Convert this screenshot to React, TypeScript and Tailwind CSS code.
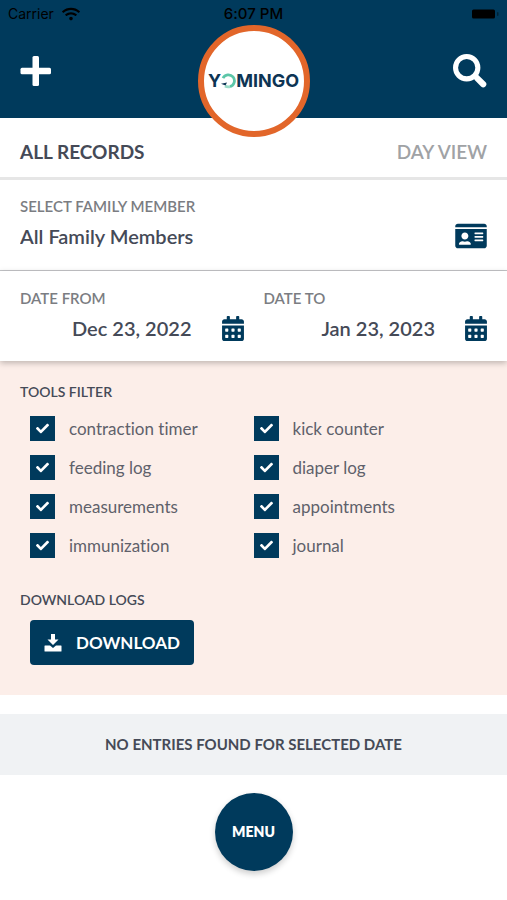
import React, { useState } from "react";
import { FaCalendarAlt, FaCheck, FaIdCard, FaWifi } from "react-icons/fa";

const tools: string[] = [
  "contraction timer",
  "kick counter",
  "feeding log",
  "diaper log",
  "measurements",
  "appointments",
  "immunization",
  "journal",
];

const StatusBar = () => (
  <div className="grid grid-cols-3 items-center h-7 px-2 text-[15px] text-black font-['Inter',sans-serif]">
    <div className="flex items-center gap-2 text-sm">
      <span>Carrier</span>
      <FaWifi className="w-[18px] h-4" />
    </div>
    <span className="text-center font-medium">6:07 PM</span>
    <svg viewBox="0 0 28 12" className="w-7 h-3 justify-self-end" aria-hidden="true">
      <rect x="1" y="1.5" width="23" height="9" rx="1.5" />
      <rect x="26" y="4" width="1.5" height="4" rx="0.7" opacity="0.4" />
    </svg>
  </div>
);

const Logo = () => (
  <div className="absolute left-1/2 top-[25px] -translate-x-1/2 flex size-28 items-center justify-center rounded-full border-[6px] border-[#e2662a] bg-white">
    <span className="flex items-center text-lg font-bold text-[#0d3454] font-['Inter',sans-serif]">
      Y
      <svg viewBox="1 0 15 16" className="h-4 w-[15px]" fill="none" aria-hidden="true">
        <path d="M3 5.2A6 6 0 1 1 10 13.6" stroke="#5cc6a8" strokeWidth="2.8" />
        <path d="M10 13.6A6 6 0 0 1 5 13" stroke="#9adcc8" strokeWidth="2.8" />
        <path d="M1 10.8L7 9.5L5.5 12.5Z" fill="#0d3454" />
      </svg>
      MINGO
    </span>
  </div>
);

type DateFieldProps = {
  id: string;
  label: string;
  defaultValue: string;
};

const DateField = ({ id, label, defaultValue }: DateFieldProps) => (
  <div>
    <label htmlFor={id} className="block text-[15px] leading-5 font-semibold text-[#7b7d82]">
      {label}
    </label>
    <div className="flex items-center pt-1">
      <input
        id={id}
        type="text"
        defaultValue={defaultValue}
        className="min-w-0 flex-1 pr-[30px] text-right text-xl leading-8 font-semibold text-[#454a57] outline-none"
      />
      <FaCalendarAlt className="w-[22px] h-[25px] text-[#003a5c]" />
    </div>
  </div>
);

const App = () => {
  const [selected, setSelected] = useState<string[]>(tools);

  const toggle = (tool: string) => {
    setSelected((prev) =>
      prev.includes(tool) ? prev.filter((t) => t !== tool) : [...prev, tool]
    );
  };

  return (
    <main className="min-h-screen bg-white font-['Lato',sans-serif] text-[#454a57] [font-variant-ligatures:none]">
      <header className="relative bg-[#003a5c]">
        <StatusBar />
        <div className="flex items-center justify-between px-5 pt-[26px] pb-[30px] text-white">
          <button type="button" aria-label="Add record">
            <svg viewBox="0 0 32 32" className="size-8" fill="currentColor" aria-hidden="true">
              <rect x="12.5" y="1" width="6.5" height="30" rx="1.5" />
              <rect x="0.5" y="12.7" width="30.5" height="6.5" rx="1.5" />
            </svg>
          </button>
          <button type="button" aria-label="Search">
            <svg viewBox="0 0 36 36" className="size-[34px]" fill="none" stroke="currentColor" aria-hidden="true">
              <circle cx="14.5" cy="14.5" r="11.8" strokeWidth="5.4" />
              <path d="M22.5 22.5L26 26" strokeWidth="4.5" />
              <path d="M25.5 25.5L32 32" strokeWidth="6.5" strokeLinecap="round" />
            </svg>
          </button>
        </div>
        <Logo />
      </header>

      <nav className="flex items-center justify-between border-b-[3px] border-[#e6e6e6] px-5 pt-5 pb-[11px] text-[19px] leading-7">
        <a href="#records" className="font-bold">
          ALL RECORDS
        </a>
        <a href="#day" className="font-semibold text-[#a0a2a5]">
          DAY VIEW
        </a>
      </nav>

      <section className="border-b border-[#c4c5c8] px-5 pt-4 pb-[18px]">
        <label htmlFor="member" className="block text-[15px] leading-5 font-semibold text-[#7b7d82]">
          SELECT FAMILY MEMBER
        </label>
        <div className="flex items-center pt-1">
          <select
            id="member"
            className="flex-1 appearance-none text-xl leading-8 font-semibold outline-none"
          >
            <option>All Family Members</option>
          </select>
          <FaIdCard className="w-8 h-7 text-[#003a5c]" />
        </div>
      </section>

      <section className="relative grid grid-cols-2 gap-5 px-5 py-[17px] shadow-[0_2px_6px_rgba(0,0,0,0.25)]">
        <DateField id="from" label="DATE FROM" defaultValue="Dec 23, 2022" />
        <DateField id="to" label="DATE TO" defaultValue="Jan 23, 2023" />
      </section>

      <section className="bg-[#fceee9] px-5 pt-[21px] pb-[30px]">
        <h2 className="text-sm leading-5 font-semibold">TOOLS FILTER</h2>
        <div className="grid grid-cols-2 gap-y-[14px] px-[10px] pt-[14px]">
          {tools.map((tool) => (
            <label key={tool} className="flex items-center gap-[14px] text-[17px] leading-[25px] text-[#5f616b]">
              <span className="relative flex size-[25px] items-center justify-center">
                <input
                  type="checkbox"
                  checked={selected.includes(tool)}
                  onChange={() => toggle(tool)}
                  className="size-full appearance-none border border-[#003a5c] bg-white checked:bg-[#003a5c]"
                />
                {selected.includes(tool) && (
                  <FaCheck className="pointer-events-none absolute size-[13px] text-white" />
                )}
              </span>
              {tool}
            </label>
          ))}
        </div>

        <h2 className="pt-8 text-sm leading-5 font-semibold">DOWNLOAD LOGS</h2>
        <div className="px-[10px] pt-[10px]">
          <button
            type="button"
            className="flex h-[45px] items-center gap-[14px] rounded bg-[#003a5c] px-[14px] text-[17px] font-bold text-white"
          >
            <svg viewBox="0 0 18 18" className="size-[18px]" fill="currentColor" aria-hidden="true">
              <path d="M7 0H11V5.5H14.5L9 11L3.5 5.5H7Z" />
              <path d="M1 11.5H6L9 14L12 11.5H17Q17.5 11.5 17.5 12V17Q17.5 17.5 17 17.5H1Q0.5 17.5 0.5 17V12Q0.5 11.5 1 11.5Z" />
            </svg>
            DOWNLOAD
          </button>
        </div>
      </section>

      <p className="mt-[19px] bg-[#f0f2f4] py-5 text-center text-[15px] leading-[21px] font-bold">
        NO ENTRIES FOUND FOR SELECTED DATE
      </p>

      <div className="flex justify-center pt-[18px] pb-7">
        <button
          type="button"
          className="size-[78px] rounded-full bg-[#003a5c] text-sm font-extrabold text-white shadow-[0_3px_6px_rgba(0,0,0,0.2)]"
        >
          MENU
        </button>
      </div>
    </main>
  );
};

export default App;
